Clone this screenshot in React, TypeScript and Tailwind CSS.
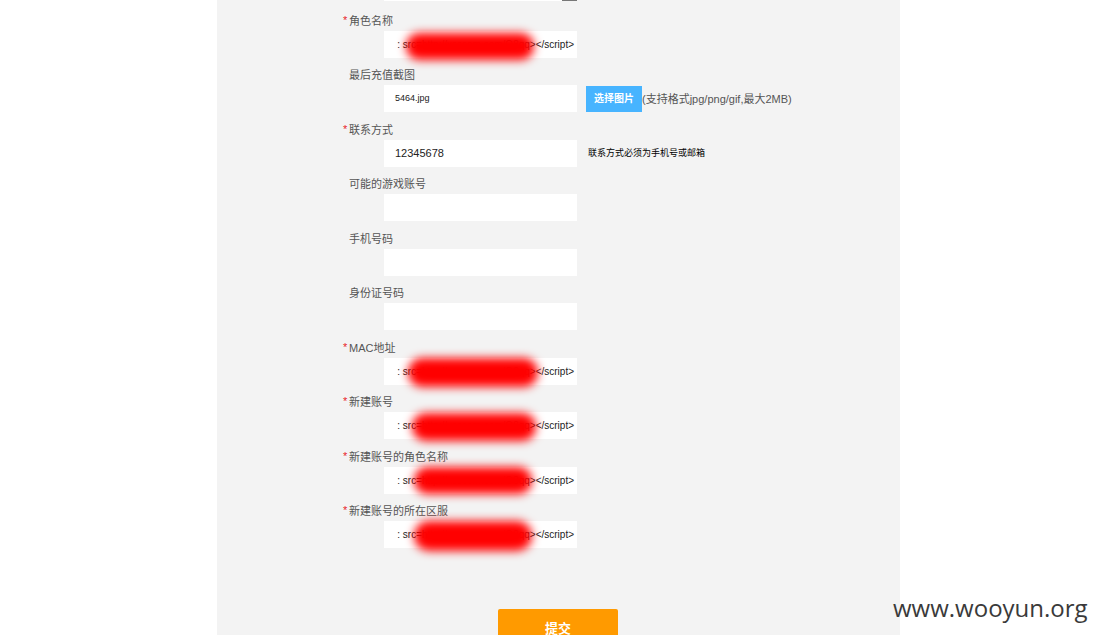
import React from 'react';

const font = { fontFamily: '"Liberation Sans", "Noto Sans CJK SC", sans-serif' };

interface Field {
  label: string;
  required?: boolean;
  value?: string;
  redacted?: boolean;
  blob?: string;
}

const fields: Field[] = [
  { label: '角色名称', required: true, value: ': src=http://xsscom.com/O8qq></script>', redacted: true, blob: 'left-[22px] w-[128px] top-[2px] h-[27px]' },
  { label: '最后充值截图', value: '5464.jpg' },
  { label: '联系方式', required: true, value: '12345678' },
  { label: '可能的游戏账号' },
  { label: '手机号码' },
  { label: '身份证号码' },
  { label: 'MAC地址', required: true, value: ': src=http://xsscom.com/O8qq></script>', redacted: true, blob: 'left-[24px] w-[130px] top-[0px] h-[29px]' },
  { label: '新建账号', required: true, value: ': src=http://xsscom.com/O8qq></script>', redacted: true, blob: 'left-[28px] w-[124px] top-[1px] h-[28px]' },
  { label: '新建账号的角色名称', required: true, value: ': src=http://xsscom.com/O8qq></script>', redacted: true, blob: 'left-[30px] w-[118px] top-[0px] h-[27px]' },
  { label: '新建账号的所在区服', required: true, value: ': src=http://xsscom.com/O8qq></script>', redacted: true, blob: 'left-[30px] w-[118px] top-[0px] h-[30px]' },
];

function Row({ f, idx }: { f: Field; idx: number }) {
  return (
    <div className="h-[54.44px]">
      <div className="relative h-[14px] leading-[14px] text-[11px] text-[#555] pl-[6px]">
        {f.required && <span className="absolute left-0 top-[-1px] text-[#e8232a]">*</span>}
        {f.label}
      </div>
      <div className="mt-[3px] flex items-center">
        <div className="relative ml-[41px] w-[193px] h-[27px] bg-white flex items-center overflow-visible">
          {f.redacted ? (
            <div className="w-full h-full overflow-hidden flex items-center justify-end pr-[3px] text-[10px] text-[#222] whitespace-nowrap">
              {f.value}
            </div>
          ) : f.value ? (
            <div className={`pl-[11px] text-[#222] ${idx === 1 ? 'text-[9px]' : 'text-[11px]'}`}>{f.value}</div>
          ) : null}
          {f.redacted && (
            <div className={`absolute rounded-full bg-[#ff0000] blur-[5px] ${f.blob}`} />
          )}
        </div>
        {idx === 1 && (
          <>
            <div className="ml-[9px] w-[56px] h-[26px] bg-[#47b4ff] text-white text-[10px] font-bold flex items-center justify-center">
              选择图片
            </div>
            <div className="text-[11px] text-[#555]">(支持格式jpg/png/gif,最大2MB)</div>
          </>
        )}
        {idx === 2 && (
          <div className="ml-[11px] text-[9px] text-black">联系方式必须为手机号或邮箱</div>
        )}
      </div>
    </div>
  );
}

export default function App() {
  return (
    <div className="relative w-[1099px] h-[635px] bg-white overflow-hidden" style={font}>
      <div className="ml-[217px] w-[683px] h-full bg-[#f3f3f3] flex flex-col">
        <div className="flex h-[2px] ml-[167px]">
          <div className="w-[178px] h-[1px] bg-white" />
          <div className="w-[15px] h-[1px] bg-[#777]" />
        </div>
        <div className="pt-[13px] pl-[126px]">
          {fields.map((f, i) => (
            <Row key={i} f={f} idx={i} />
          ))}
        </div>
        <div className="mt-[51px] ml-[281px] w-[120px] h-[40px] bg-[#ff9a00] rounded-t-[2px] flex justify-center pt-[10px] text-white text-[13px] font-bold">
          提交
        </div>
      </div>
      <div className="absolute left-[893px] top-[590px] text-[24px] text-[#3a3a3a]" style={{ fontFamily: '"Open Sans", sans-serif' }}>
        www.wooyun.org
      </div>
    </div>
  );
}
